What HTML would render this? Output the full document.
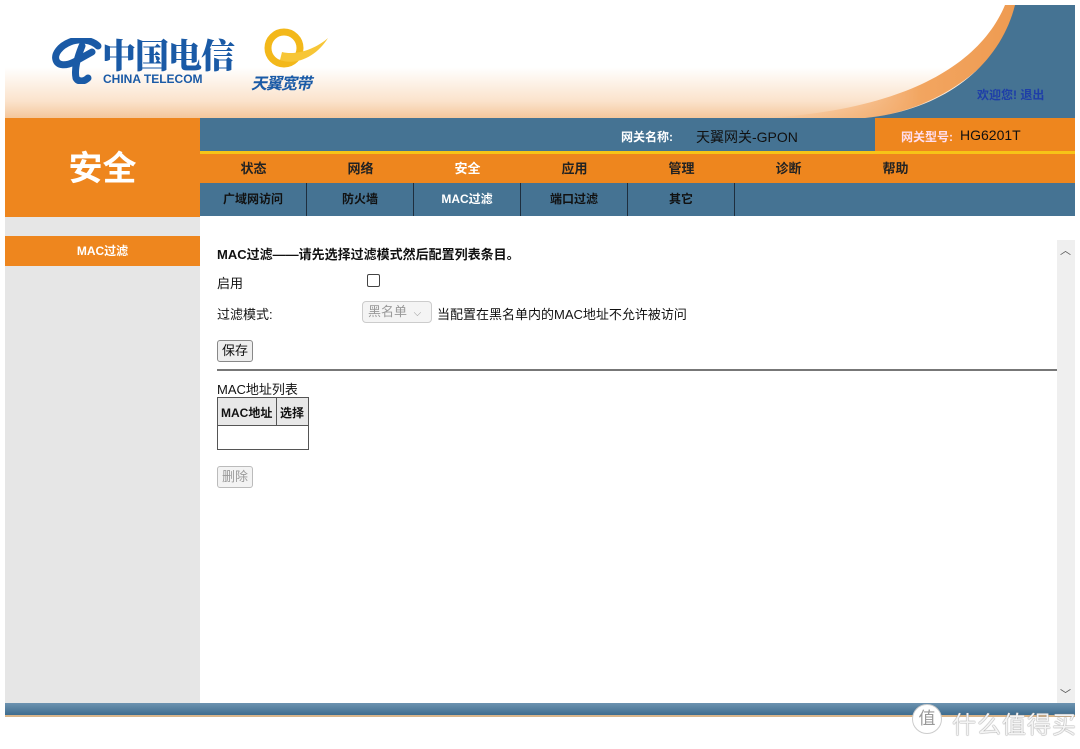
<!DOCTYPE html>
<html><head><meta charset="utf-8"><style>
*{margin:0;padding:0;box-sizing:border-box}
body{width:1080px;height:749px;background:#fff;position:relative;overflow:hidden;font-family:"Liberation Sans","Noto Sans CJK SC",sans-serif;font-size:13px;color:#111}
.a{position:absolute}
.nav span{position:absolute;top:0;width:107px;text-align:center;font-weight:bold;font-size:13px;line-height:30px;color:#222}
.sub div{position:absolute;top:0;height:33px;width:107px;border-right:1px solid #1e2e3e;text-align:center;line-height:33px;font-size:12px;font-weight:bold;color:#111}
.btn{position:absolute;border:1px solid #888;border-radius:3px;background:#eee;font-size:13px;padding:1px 4px;line-height:18px}
</style></head><body>
<div class="a" style="left:5px;top:5px;width:1070px;height:113px;background:linear-gradient(#fff 0%,#fff 55%,#fbe3cc 85%,#f4c79c 100%)"></div>
<svg class="a" style="left:5px;top:5px" width="1070" height="113">
<defs><linearGradient id="g" x1="0" x2="1"><stop offset="0" stop-color="#f6b47a" stop-opacity="0"/><stop offset="0.6" stop-color="#f2a560"/><stop offset="1" stop-color="#ee9a50"/></linearGradient></defs>
<path d="M760 113 C900 105 975 60 1000 0 L1020 0 C990 70 920 108 860 113 Z" fill="url(#g)"/>
<path d="M860 113 C940 105 995 60 1010 0 L1070 0 L1070 113 Z" fill="#457393"/>
</svg>
<svg class="a" style="left:52px;top:38px" width="52" height="46"><path d="M46 8 C40 2 28 0 18 4 C8 8 2 16 4 22 C6 28 14 28 22 24 L40 14 M30 8 C26 18 22 30 24 40 C26 44 32 44 36 40" fill="none" stroke="#1a5aa6" stroke-width="7" stroke-linecap="round"/></svg>
<div class="a" style="left:102px;top:34px;font-size:34px;font-weight:900;color:#1a5aa6;letter-spacing:-1px;line-height:40px;font-family:'Noto Serif CJK SC',serif">中国电信</div>
<div class="a" style="left:103px;top:72px;font-size:12px;font-weight:bold;color:#1a5aa6">CHINA TELECOM</div>
<svg class="a" style="left:262px;top:26px" width="70" height="44"><ellipse cx="22" cy="22" rx="16" ry="16" fill="none" stroke="#f3b81a" stroke-width="7"/><path d="M20 26 C35 30 55 22 66 12 C55 30 35 40 18 34Z" fill="#f7c637"/><circle cx="24" cy="20" r="5" fill="#fff"/></svg>
<div class="a" style="left:251px;top:70px;font-size:16px;font-weight:bold;font-style:italic;color:#1a5aa6;letter-spacing:-1px">天翼宽带</div>
<div class="a" style="left:977px;top:86px;font-size:12px;font-weight:bold;color:#1e3ea8">欢迎您! 退出</div>
<div class="a" style="left:5px;top:118px;width:195px;height:99px;background:#ee861e"></div>
<div class="a" style="left:5px;top:147px;width:195px;text-align:center;font-size:34px;font-weight:bold;color:#fff;line-height:44px">安全</div>
<div class="a" style="left:200px;top:118px;width:875px;height:33px;background:#457393"></div>
<div class="a" style="left:875px;top:118px;width:200px;height:33px;background:#ee861e"></div>
<div class="a" style="left:621px;top:128px;font-size:12px;font-weight:bold;color:#fff">网关名称:</div>
<div class="a" style="left:696px;top:127px;font-size:14px;color:#111">天翼网关-GPON</div>
<div class="a" style="left:901px;top:128px;font-size:12px;font-weight:bold;color:#fde">网关型号:</div>
<div class="a" style="left:960px;top:127px;font-size:14px;color:#111">HG6201T</div>
<div class="a" style="left:200px;top:151px;width:875px;height:3px;background:#f7c417"></div>
<div class="a nav" style="left:200px;top:154px;width:875px;height:29px;background:#ee861e">
<span style="left:0">状态</span><span style="left:107px">网络</span><span style="left:214px;color:#fff">安全</span><span style="left:321px">应用</span><span style="left:428px">管理</span><span style="left:535px">诊断</span><span style="left:642px">帮助</span></div>
<div class="a sub" style="left:200px;top:183px;width:875px;height:33px;background:#457393">
<div style="left:0">广域网访问</div><div style="left:107px">防火墙</div><div style="left:214px;color:#fff">MAC过滤</div><div style="left:321px">端口过滤</div><div style="left:428px">其它</div></div>
<div class="a" style="left:5px;top:217px;width:195px;height:486px;background:#e6e6e6"></div>
<div class="a" style="left:5px;top:236px;width:195px;height:30px;background:#ee861e;color:#fff;font-weight:bold;font-size:12px;text-align:center;line-height:30px">MAC过滤</div>
<div class="a" style="left:1057px;top:240px;width:18px;height:463px;background:#efefef"></div>
<div class="a" style="left:1060px;top:242px;font-size:11px;color:#555">︿</div>
<div class="a" style="left:1060px;top:686px;font-size:11px;color:#555">﹀</div>
<div class="a" style="left:217px;top:244px;font-weight:bold;font-size:13px">MAC过滤——请先选择过滤模式然后配置列表条目。</div>
<div class="a" style="left:217px;top:273px">启用</div>
<div class="a" style="left:367px;top:274px;width:13px;height:13px;border:1px solid #444;border-radius:2px"></div>
<div class="a" style="left:217px;top:304px">过滤模式:</div>
<div class="a" style="left:362px;top:301px;width:70px;height:22px;border:1px solid #ccc;border-radius:4px;background:#f4f4f4;color:#999;padding-left:5px;line-height:20px">黑名单 <span style="font-size:10px;margin-left:3px">⌵</span></div>
<div class="a" style="left:437px;top:304px">当配置在黑名单内的MAC地址不允许被访问</div>
<div class="btn" style="left:217px;top:340px">保存</div>
<div class="a" style="left:217px;top:369px;width:840px;height:2px;background:#777"></div>
<div class="a" style="left:217px;top:379px">MAC地址列表</div>
<div class="a" style="left:217px;top:397px;width:92px;height:53px;border:1px solid #555"></div>
<div class="a" style="left:218px;top:398px;width:90px;height:28px;background:#e8e8e8;border-bottom:1px solid #555"></div>
<div class="a" style="left:276px;top:398px;width:1px;height:28px;background:#555"></div>
<div class="a" style="left:221px;top:404px;font-size:12px;font-weight:bold">MAC地址</div>
<div class="a" style="left:280px;top:404px;font-size:12px;font-weight:bold">选择</div>
<div class="btn" style="left:217px;top:466px;color:#999;border-color:#bbb;background:#f3f3f3">删除</div>
<div class="a" style="left:5px;top:703px;width:1070px;height:14px;background:linear-gradient(#6d93b0,#3e6c8e);border-bottom:2px solid #d9b58a"></div>
<div class="a" style="left:912px;top:704px;width:30px;height:30px;border-radius:50%;background:#fff;border:1px solid #ccc;text-align:center;line-height:28px;color:#999;font-size:17px">值</div>
<div class="a" style="left:952px;top:705px;font-size:24px;color:#f4f4f4;text-shadow:0 0 1px #888,0 0 1px #888;letter-spacing:1px">什么值得买</div>
</body></html>
